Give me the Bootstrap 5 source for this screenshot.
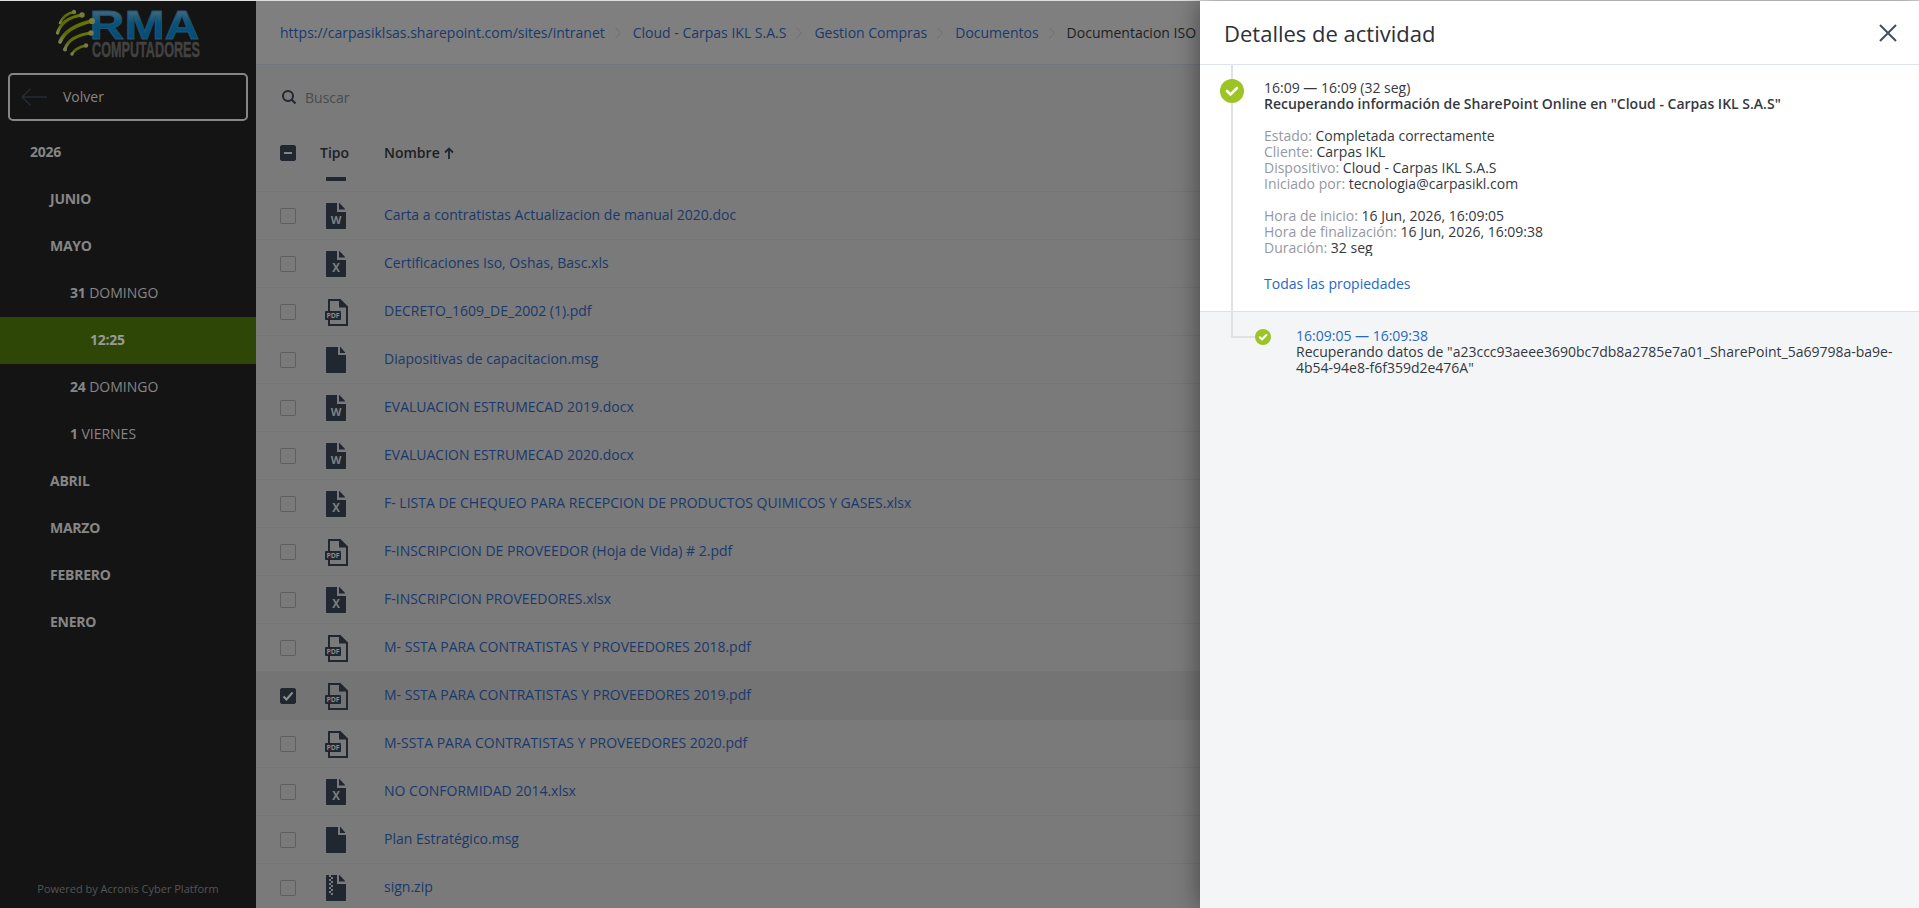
<!DOCTYPE html>
<html lang="es">
<head>
<meta charset="utf-8">
<title>Detalles de actividad</title>
<link href="https://cdn.jsdelivr.net/npm/bootstrap@5.3.0/dist/css/bootstrap.min.css" rel="stylesheet">
<style>
  body{font:14px/16px "Open Sans",sans-serif;color:#35383f;height:908px;overflow:hidden;background:#7a7a7a}
  a{text-decoration:none}
  svg{display:block;flex:none}
  .shell{height:908px;border-top:1px solid #dedfde}
  .side{width:256px;background:#141414;color:#868686;flex:none}
  .logo-box{height:72px;padding:5px 0 0 54px}
  .logo-box svg{overflow:visible}
  .back-btn,.back-btn:hover{height:48px;margin:0 8px;border:2px solid #868686;border-radius:5px;color:#868686;background:none;padding:0 11px;font-size:14px;text-align:left}
  .back-btn span{margin-left:15px}
  .tree{padding-top:7px}
  .tree a{height:47px;color:#868686;white-space:pre}
  .tree a:nth-child(5){margin-top:1px;height:47px;padding-bottom:2px}
  .tree a:nth-child(6){margin-top:-1px}
  .tree b{font-weight:700;letter-spacing:-.25px}
  .tree .on{background:#2e4707;color:#999}
  .l0{padding-left:30px}.l1{padding-left:50px}.l2{padding-left:70px}.l3{padding-left:90px}
  .powered{font-size:11px;color:#555;padding-bottom:11px}
  .main-col{width:944px;overflow:hidden;flex:none}
  .crumbs{height:64px;background:#7f7f7f;border-bottom:1px solid #70747d;padding-left:24px;white-space:nowrap}
  .crumbs svg{margin:0 12px 0 10px}
  .crumbs a,.file-row a{color:#19396c}
  .crumbs span{color:#1c1e22}
  .search{height:64px;padding-left:26px;color:#494b4d}
  .search span{margin-left:9px;padding-top:1px}
  .thead-row{height:48px;padding-left:24px;font-weight:600;color:#1d2025}
  .th-type{margin-left:24px;width:64px}
  .chk{width:16px;height:16px;border:1px solid #606060;border-radius:2px;flex:none}
  .chk.full{background:#202730;border-color:#202730}
  .file-row{height:48px;border-bottom:1px solid #747474;padding-left:24px}
  .file-row.sel{background:#747474}
  .file-row a{padding-bottom:2px}
  .ico{width:24px;margin:0 36px 0 28px}
  .cut{height:15px;border-bottom:1px solid #747474}
  .cut i{display:block;width:20px;height:4px;background:#202730;margin-left:70px;border-radius:0 0 1px 1px}
  .panel{width:719px;background:#f4f5f7;box-shadow:0 0 24px rgba(0,0,0,.45);flex:none;z-index:2}
  .panel-head{height:64px;background:#fff;border-bottom:1px solid #dde4f1;padding:0 22px 0 24px}
  .panel-head h1{font-size:22px;line-height:28px;font-weight:400;margin:0;color:#2b303a}
  .act{height:247px;background:#fff;border-bottom:1px solid #dfe1e5;position:relative}
  .act-text{padding:15px 20px 0 64px}
  .details{margin-top:16px;height:128px;overflow:hidden}
  .details span{color:#9598a2}
  .panel a{color:#2668c5}
  .all-props{margin-top:20px}
  .sub-act{padding:16px 20px 0 96px}
  .line{position:absolute;left:31px;top:0;width:24px;height:273px;border-left:2px solid #dfe1e5;border-bottom:2px solid #dfe1e5}
  .dot{position:absolute;left:20px;top:14px}
  .dot-s{position:absolute;left:55px;top:264px}
</style>
</head>
<body>
<svg width="0" height="0" class="position-absolute">
  <defs>
    <symbol id="page" viewBox="0 0 24 28"><path fill="#202730" d="M3 1H13V10H22V26.200Q22 27 21.200 27H2.800Q2 27 2 26.200V1.800Q2 1 2.800 1zM15 1.500V7.500H21.500L15.500 1z"/></symbol>
    <symbol id="plain" viewBox="0 0 24 28"><path fill="#202730" d="M2.800 1H14V9H22V26.200Q22 27 21.200 27H2.800Q2 27 2 26.200V1.800Q2 1 2.800 1zM16 1.500V7H21.500L16.500 1z"/></symbol>
    <symbol id="doc" viewBox="0 0 24 28"><use href="#page"/><text x="12" y="22" text-anchor="middle" font-family="Open Sans" font-weight="700" font-size="11" fill="#808080">W</text></symbol>
    <symbol id="xls" viewBox="0 0 24 28"><use href="#page"/><text x="12" y="22" text-anchor="middle" font-family="Open Sans" font-weight="700" font-size="11.500" fill="#808080">X</text></symbol>
    <symbol id="pdf" viewBox="0 0 24 28"><path fill="none" stroke="#202730" stroke-width="2" d="M5 14V2H16L23 9V27H5V20"/><path fill="#202730" d="M15 1L24 9.500H15z"/><rect x="1" y="13" width="16" height="9" rx="1" fill="#202730"/><text x="9" y="20" text-anchor="middle" font-family="Open Sans" font-weight="700" font-size="7" fill="#8a8a8a" textLength="13">PDF</text></symbol>
    <symbol id="zip" viewBox="0 0 24 28"><use href="#page"/><path fill="#7c7c7c" d="M5 1h2v2H5zM7 3h2v2H7zM5 5h2v2H5zM7 7h2v2H7zM5 9h2v2H5zM7 11h2v2H7zM5 13h2v2H5zM7 15h2v2H7zM5 17h2v2H5zM7 19h2v2H7z"/></symbol>
    <symbol id="chev" viewBox="0 0 6 12"><path d="M.5 .5L5.300 6L.5 11.500" fill="none" stroke="#707070"/></symbol>
    <linearGradient id="rma" x1="0" y1="0" x2="0" y2="1"><stop offset=".18" stop-color="#426b80"/><stop offset=".45" stop-color="#09527a"/><stop offset="1" stop-color="#00497a"/></linearGradient>
    <linearGradient id="leaf" x1="0" y1="1" x2="1" y2="0"><stop offset="0" stop-color="#7b8350"/><stop offset=".3" stop-color="#5c6b00"/><stop offset="1" stop-color="#6a7800"/></linearGradient>
  </defs>
</svg>
<div class="shell d-flex">
  <nav class="side d-flex flex-column">
    <div class="logo-box">
      <svg width="148" height="54" viewBox="54 6 148 54">
        <g fill="none" stroke="url(#leaf)" stroke-linecap="round">
          <path stroke-width="2.600" d="M60 23Q64 14 74 12"/><path stroke-width="3.200" d="M57.500 33Q62 18 82 15"/><path stroke-width="3.600" d="M60 42Q66 27 92 21"/><path stroke-width="3.200" d="M65 49Q69 36 91 33"/><path stroke-width="2.600" d="M72 54Q75 48 86 45.500"/>
        </g>
        <text x="89.500" y="39" font-family="Liberation Sans" font-weight="700" font-size="41" textLength="110" lengthAdjust="spacingAndGlyphs" fill="url(#rma)" stroke="#24566f" stroke-width=".8">RMA</text>
        <g fill="#777c43"><circle cx="74" cy="12" r="2.200"/><circle cx="82" cy="15" r="2.700"/><circle cx="92" cy="21" r="3.100"/><circle cx="91" cy="33" r="2.700"/><circle cx="86" cy="45.500" r="2.200"/><circle cx="65" cy="49.500" r="2"/><circle cx="72" cy="54" r="1.700"/></g>
        <text x="92" y="56.500" font-family="Liberation Sans Narrow, Liberation Sans" font-weight="700" font-size="21.500" textLength="108" lengthAdjust="spacingAndGlyphs" fill="#424240" stroke="#424240" stroke-width=".5">COMPUTADORES</text>
      </svg>
    </div>
    <button class="back-btn d-flex align-items-center">
      <svg width="27" height="18" viewBox="0 0 27 18" fill="none" stroke="#252b33" stroke-width="1.600"><path d="M26 9H1M9.500 .8L1.200 9L9.500 17.200"/></svg>
      <span>Volver</span>
    </button>
    <div class="tree d-flex flex-column">
      <a class="l0 d-flex align-items-center"><b>2026</b></a>
      <a class="l1 d-flex align-items-center"><b>JUNIO</b></a>
      <a class="l1 d-flex align-items-center"><b>MAYO</b></a>
      <a class="l2 d-flex align-items-center"><b>31</b> DOMINGO</a>
      <a class="l3 on d-flex align-items-center"><b>12:25</b></a>
      <a class="l2 d-flex align-items-center"><b>24</b> DOMINGO</a>
      <a class="l2 d-flex align-items-center"><b>1</b> VIERNES</a>
      <a class="l1 d-flex align-items-center"><b>ABRIL</b></a>
      <a class="l1 d-flex align-items-center"><b>MARZO</b></a>
      <a class="l1 d-flex align-items-center"><b>FEBRERO</b></a>
      <a class="l1 d-flex align-items-center"><b>ENERO</b></a>
    </div>
    <div class="powered mt-auto text-center">Powered by Acronis Cyber Platform</div>
  </nav>
  <main class="main-col">
    <div class="crumbs d-flex align-items-center">
      <a href="#">https://carpasiklsas.sharepoint.com/sites/intranet</a><svg width="6" height="12"><use href="#chev"/></svg>
      <a href="#">Cloud - Carpas IKL S.A.S</a><svg width="6" height="12"><use href="#chev"/></svg>
      <a href="#">Gestion Compras</a><svg width="6" height="12"><use href="#chev"/></svg>
      <a href="#">Documentos</a><svg width="6" height="12"><use href="#chev"/></svg>
      <span>Documentacion ISO</span>
    </div>
    <div class="search d-flex align-items-center">
      <svg width="14" height="14" viewBox="0 0 14 14" fill="none" stroke="#202730" stroke-width="2"><circle cx="6" cy="6" r="5"/><path d="M9.500 9.500L13.500 13.500"/></svg>
      <span>Buscar</span>
    </div>
    <div class="thead-row d-flex align-items-center">
      <div class="chk full"><svg width="14" height="14"><path d="M3 7H11" stroke="#858585" stroke-width="2"/></svg></div>
      <span class="th-type">Tipo</span><span>Nombre</span>
      <svg class="ms-1" width="10" height="12" viewBox="0 0 10 12" fill="none" stroke="#202730" stroke-width="1.800"><path d="M5 12V2M1 5.500L5 1.500L9 5.500"/></svg>
    </div>
    <div class="cut"><i></i></div>
    <div id="files"></div>
  </main>
  <aside class="panel">
    <div class="panel-head d-flex align-items-center justify-content-between">
      <h1>Detalles de actividad</h1>
      <svg width="18" height="18" viewBox="0 0 18 18"><path d="M1 1L17 17M17 1L1 17" stroke="#435061" stroke-width="2"/></svg>
    </div>
    <section class="act">
      <div class="line"></div>
      <svg class="dot" width="24" height="24" viewBox="0 0 24 24"><circle cx="12" cy="12" r="12" fill="#9bc424"/><path d="M7 12L10.500 15.500L17 9" fill="none" stroke="#fff" stroke-width="2.600" stroke-linecap="round"/></svg>
      <svg class="dot-s" width="16" height="16" viewBox="0 0 16 16"><circle cx="8" cy="8" r="8" fill="#9bc424"/><path d="M4.800 8.200L7 10.300L11.400 6" fill="none" stroke="#fff" stroke-width="2" stroke-linecap="round"/></svg>
      <div class="act-text">
        <div>16:09 — 16:09 (32 seg)</div>
        <div class="fw-semibold">Recuperando información de SharePoint Online en "Cloud - Carpas IKL S.A.S"</div>
        <div class="details">
          <div><span>Estado:</span> Completada correctamente</div>
          <div><span>Cliente:</span> Carpas IKL</div>
          <div><span>Dispositivo:</span> Cloud - Carpas IKL S.A.S</div>
          <div class="mb-3"><span>Iniciado por:</span> tecnologia@carpasikl.com</div>
          <div><span>Hora de inicio:</span> 16 Jun, 2026, 16:09:05</div>
          <div><span>Hora de finalización:</span> 16 Jun, 2026, 16:09:38</div>
          <div><span>Duración:</span> 32 seg</div>
        </div>
        <a href="#" class="d-block all-props">Todas las propiedades</a>
      </div>
    </section>
    <section class="sub-act">
      <a href="#" class="d-block">16:09:05 — 16:09:38</a>
      <div>Recuperando datos de "a23ccc93aeee3690bc7db8a2785e7a01_SharePoint_5a69798a-ba9e-4b54-94e8-f6f359d2e476A"</div>
    </section>
  </aside>
</div>
<script>
  const files = [
    ['doc','Carta a contratistas Actualizacion de manual 2020.doc'],
    ['xls','Certificaciones Iso, Oshas, Basc.xls'],
    ['pdf','DECRETO_1609_DE_2002 (1).pdf'],
    ['plain','Diapositivas de capacitacion.msg'],
    ['doc','EVALUACION ESTRUMECAD 2019.docx'],
    ['doc','EVALUACION ESTRUMECAD 2020.docx'],
    ['xls','F- LISTA DE CHEQUEO PARA RECEPCION DE PRODUCTOS QUIMICOS Y GASES.xlsx'],
    ['pdf','F-INSCRIPCION DE PROVEEDOR (Hoja de Vida) # 2.pdf'],
    ['xls','F-INSCRIPCION PROVEEDORES.xlsx'],
    ['pdf','M- SSTA PARA CONTRATISTAS Y PROVEEDORES 2018.pdf'],
    ['pdf','M- SSTA PARA CONTRATISTAS Y PROVEEDORES 2019.pdf',true],
    ['pdf','M-SSTA PARA CONTRATISTAS Y PROVEEDORES 2020.pdf'],
    ['xls','NO CONFORMIDAD 2014.xlsx'],
    ['plain','Plan Estratégico.msg'],
    ['zip','sign.zip']
  ];
  document.getElementById('files').innerHTML = files.map(([t,n,s]) =>
    `<div class="file-row d-flex align-items-center${s?' sel':''}"><div class="chk${s?' full':''}">${s?'<svg width="14" height="14"><path d="M2.500 7.500L5.500 10.500L11.500 3.500" fill="none" stroke="#909090" stroke-width="2"/></svg>':''}</div><svg class="ico" width="24" height="28"><use href="#${t}"/></svg><a href="#">${n}</a></div>`).join('');
</script>
<script src="https://cdn.jsdelivr.net/npm/bootstrap@5.3.0/dist/js/bootstrap.bundle.min.js"></script>
</body>
</html>
